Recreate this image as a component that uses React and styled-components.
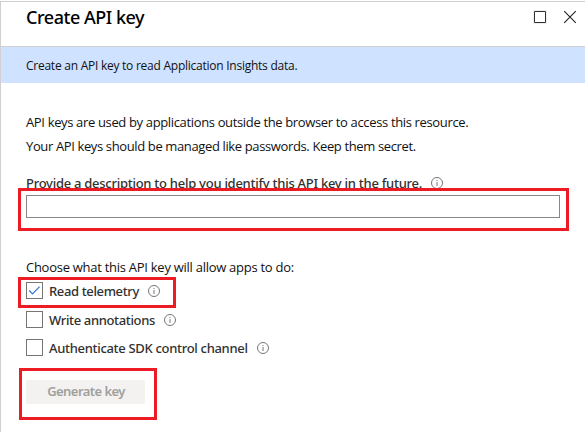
import React from "react";
import styled, { createGlobalStyle, css } from "styled-components";

const GlobalStyle = createGlobalStyle`
  *, *::before, *::after { box-sizing: border-box; }
  body { margin: 0; background: #fff; }
`;

const Blade = styled.main`
  width: 585px;
  height: 432px;
  padding-top: 1px;
  overflow: hidden;
  background: #fff;
  color: #111;
  font: 400 13px/20px "Open Sans", "Noto Sans", sans-serif;
`;

const Panel = styled.div`
  height: 431px;
  border-top: 1px solid #d2d0ce;
  border-left: 1px solid #d2d0ce;
`;

const Header = styled.header`
  display: flex;
  justify-content: space-between;
  height: 45px;
  padding: 3px 8px 0 25px;
  border-bottom: 1px solid #d2d0ce;
`;

const Title = styled.h1`
  margin: 0;
  color: #000;
  font: 500 18px/24px "Noto Sans", sans-serif;
  letter-spacing: -0.46px;
`;

const WindowActions = styled.div`
  display: flex;
  gap: 16px;
  padding-top: 5px;
`;

const IconButton = styled.button`
  display: flex;
  width: 14px;
  height: 14px;
  padding: 0;
  border: 0;
  background: none;
`;

const Banner = styled.div`
  height: 36px;
  padding: 9px 0 0 25px;
  background: #cfe2ff;
  font-size: 12px;
  letter-spacing: -0.25px;
`;

const Content = styled.section`
  padding: 29px 25px 0;
`;

const Copy = styled.p`
  margin: ${(p) => p.$before || 0}px 0 ${(p) => p.$after}px;
  letter-spacing: ${(p) => p.$tracking}px;
  white-space: nowrap;
`;

const Label = styled.label`
  color: #323130;
  font: 500 13px/20px "Noto Sans", sans-serif;
  letter-spacing: ${(p) => p.$tracking}px;
  white-space: nowrap;
`;

const FieldHeader = styled.div`
  display: flex;
  align-items: center;
  gap: 9px;
  height: 20px;
`;

const Highlighted = styled.div`
  position: relative;
  width: fit-content;
  ${(p) =>
    p.$frame &&
    css`
      &::after {
        content: "";
        position: absolute;
        inset: ${p.$frame};
        border: 3px solid #ed1c24;
        pointer-events: none;
      }
    `}
`;

const OptionRow = styled(Highlighted)`
  & + & {
    margin-top: 11px;
  }
  &:nth-child(2) {
    margin-top: 12px;
  }
  &::after {
    width: 158px;
  }
`;

const TextInput = styled.input`
  display: block;
  width: 534px;
  height: 23px;
  margin-top: 2px;
  padding: 0 8px;
  border: 1px solid #8a8886;
  border-radius: 0;
  background: #fff;
  outline: 0;
`;

const Options = styled.div`
  padding-bottom: 24px;
`;

const Option = styled.div`
  display: flex;
  align-items: center;
  height: 17px;
`;

const Checkbox = styled.span`
  display: flex;
  width: 17px;
  height: 17px;
  margin-right: 6px;
  border: 1px solid #777573;
`;

const InfoIcon = styled.svg`
  width: 12px;
  height: 12px;
  margin-left: ${(p) => p.$gap || 0}px;
  color: #777573;
`;

const GenerateButton = styled.button`
  display: block;
  width: 119px;
  height: 24px;
  padding: 0 0 2px 1px;
  border: 0;
  border-radius: 2px;
  background: #f3f2f1;
  color: #a19f9d;
  font: 600 13px/22px "Noto Sans", sans-serif;
  letter-spacing: -0.55px;
`;

function Info({ gap }) {
  return (
    <InfoIcon $gap={gap} viewBox="0 0 12 12" fill="none" stroke="currentColor">
      <circle cx="6" cy="6" r="5.5" />
      <path d="M6 5v4M6 3v1" />
    </InfoIcon>
  );
}

const options = [
  { label: "Read telemetry", tracking: -0.37, checked: true, frame: "-5px auto -9px -8px" },
  { label: "Write annotations", tracking: -0.35 },
  { label: "Authenticate SDK control channel", tracking: -0.31 },
];

export default function App() {
  return (
    <Blade>
      <GlobalStyle />
      <Panel>
        <Header>
          <Title>Create API key</Title>
          <WindowActions>
            <IconButton aria-label="Maximize">
              <svg width="14" height="14" viewBox="0 0 14 14" fill="none">
                <path d="M.5.5h13v13H.5z" stroke="#eeeeee" />
                <path d="M1.5 1.5h11v11h-11z" stroke="#323130" />
              </svg>
            </IconButton>
            <IconButton aria-label="Close">
              <svg width="14" height="14" viewBox="0 0 14 14" fill="none">
                <path d="M1.2 1.2l11.6 11.6M12.8 1.2L1.2 12.8" stroke="#222" strokeWidth="1.1" />
              </svg>
            </IconButton>
          </WindowActions>
        </Header>
        <Banner>Create an API key to read Application Insights data.</Banner>
        <Content>
          <Copy $after={4} $tracking={-0.35}>
            API keys are used by applications outside the browser to access this resource.
          </Copy>
          <Copy $after={17} $tracking={-0.37}>
            Your API keys should be managed like passwords. Keep them secret.
          </Copy>
          <FieldHeader>
            <Label htmlFor="description" $tracking={-0.265}>
              Provide a description to help you identify this API key in the future.
            </Label>
            <Info />
          </FieldHeader>
          <Highlighted $frame="-7px -9px -13px -8px">
            <TextInput id="description" />
          </Highlighted>
          <Copy $before={39} $after={5} $tracking={-0.27}>
            Choose what this API key will allow apps to do:
          </Copy>
          <Options>
            {options.map((o) => (
              <OptionRow key={o.label} $frame={o.frame}>
                <Option>
                  <Checkbox role="checkbox" aria-checked={!!o.checked} aria-label={o.label}>
                    {o.checked && (
                      <svg width="15" height="15" viewBox="0 0 15 15" fill="none">
                        <path d="M2.3 7.5l3.2 3.3L12.6 3.7" stroke="#2f74e0" strokeWidth="1.2" />
                      </svg>
                    )}
                  </Checkbox>
                  <Label $tracking={o.tracking}>{o.label}</Label>
                  <Info gap={9} />
                </Option>
              </OptionRow>
            ))}
          </Options>
          <Highlighted $frame="-12px -12px -16px -7px">
            <GenerateButton disabled>Generate key</GenerateButton>
          </Highlighted>
        </Content>
      </Panel>
    </Blade>
  );
}
